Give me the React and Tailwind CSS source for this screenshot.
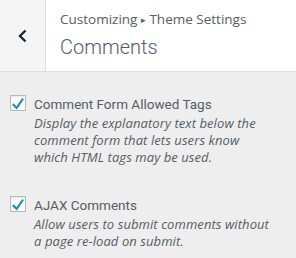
const options = [
  {
    label: 'Comment Form Allowed Tags',
    description: 'Display the explanatory text below the comment form that lets users know which HTML tags may be used.',
  },
  {
    label: 'AJAX Comments',
    description: 'Allow users to submit comments without a page re-load on submit.',
  },
];

function CheckBox() {
  return (
    <span className="flex h-4 w-4 shrink-0 items-center justify-center border border-[#b4b9be] bg-white shadow-[inset_0_1px_2px_rgba(0,0,0,0.1)]">
      <svg viewBox="0 0 16 16" className="h-[15px] w-[15px]">
        <path d="M12.8 1.6 6.3 11 3 7.8 1.2 9.7 6.6 14.8 14.8 3.1z" fill="#1e8cbe" />
      </svg>
    </span>
  );
}

export default function App() {
  return (
    <div className="h-[258px] w-[296px] bg-[#eeeeee] font-['Liberation_Sans',Arial,sans-serif] text-[#555d66]">
      <div className="flex h-[72px] border-b border-[#dddddd] bg-white">
        <button className="flex w-[46px] items-center justify-center border-r border-[#dddddd] bg-[#f5f5f5] text-[#23282d]">
          <svg viewBox="0 0 20 20" className="h-5 w-5">
            <path d="M12.5 4.5 7 10l5.5 5.5" fill="none" stroke="currentColor" strokeWidth="2.4" />
          </svg>
        </button>
        <div className="flex flex-col pl-[14px] pt-[10px]">
          <span className="font-['Open_Sans',sans-serif] text-[13.5px] leading-[18px]">
            Customizing <span className="text-[9px] align-[1px]">▸</span> Theme Settings
          </span>
          <h2 className="mt-[6px] font-['Roboto',sans-serif] text-[20px] font-light leading-[24px]">Comments</h2>
        </div>
      </div>
      <div className="flex flex-col gap-[30px] pl-[10px] pr-[20px] pt-[23px]">
        {options.map((opt) => (
          <label key={opt.label} className="flex items-start gap-[8px]">
            <CheckBox />
            <div className="flex flex-col">
              <span className="font-['Roboto',sans-serif] text-[13.5px] leading-[18px]">{opt.label}</span>
              <span className="mt-[2px] font-['Open_Sans',sans-serif] text-[13px] italic leading-[17px] tracking-[0.08px]">
                {opt.description}
              </span>
            </div>
          </label>
        ))}
      </div>
    </div>
  );
}
